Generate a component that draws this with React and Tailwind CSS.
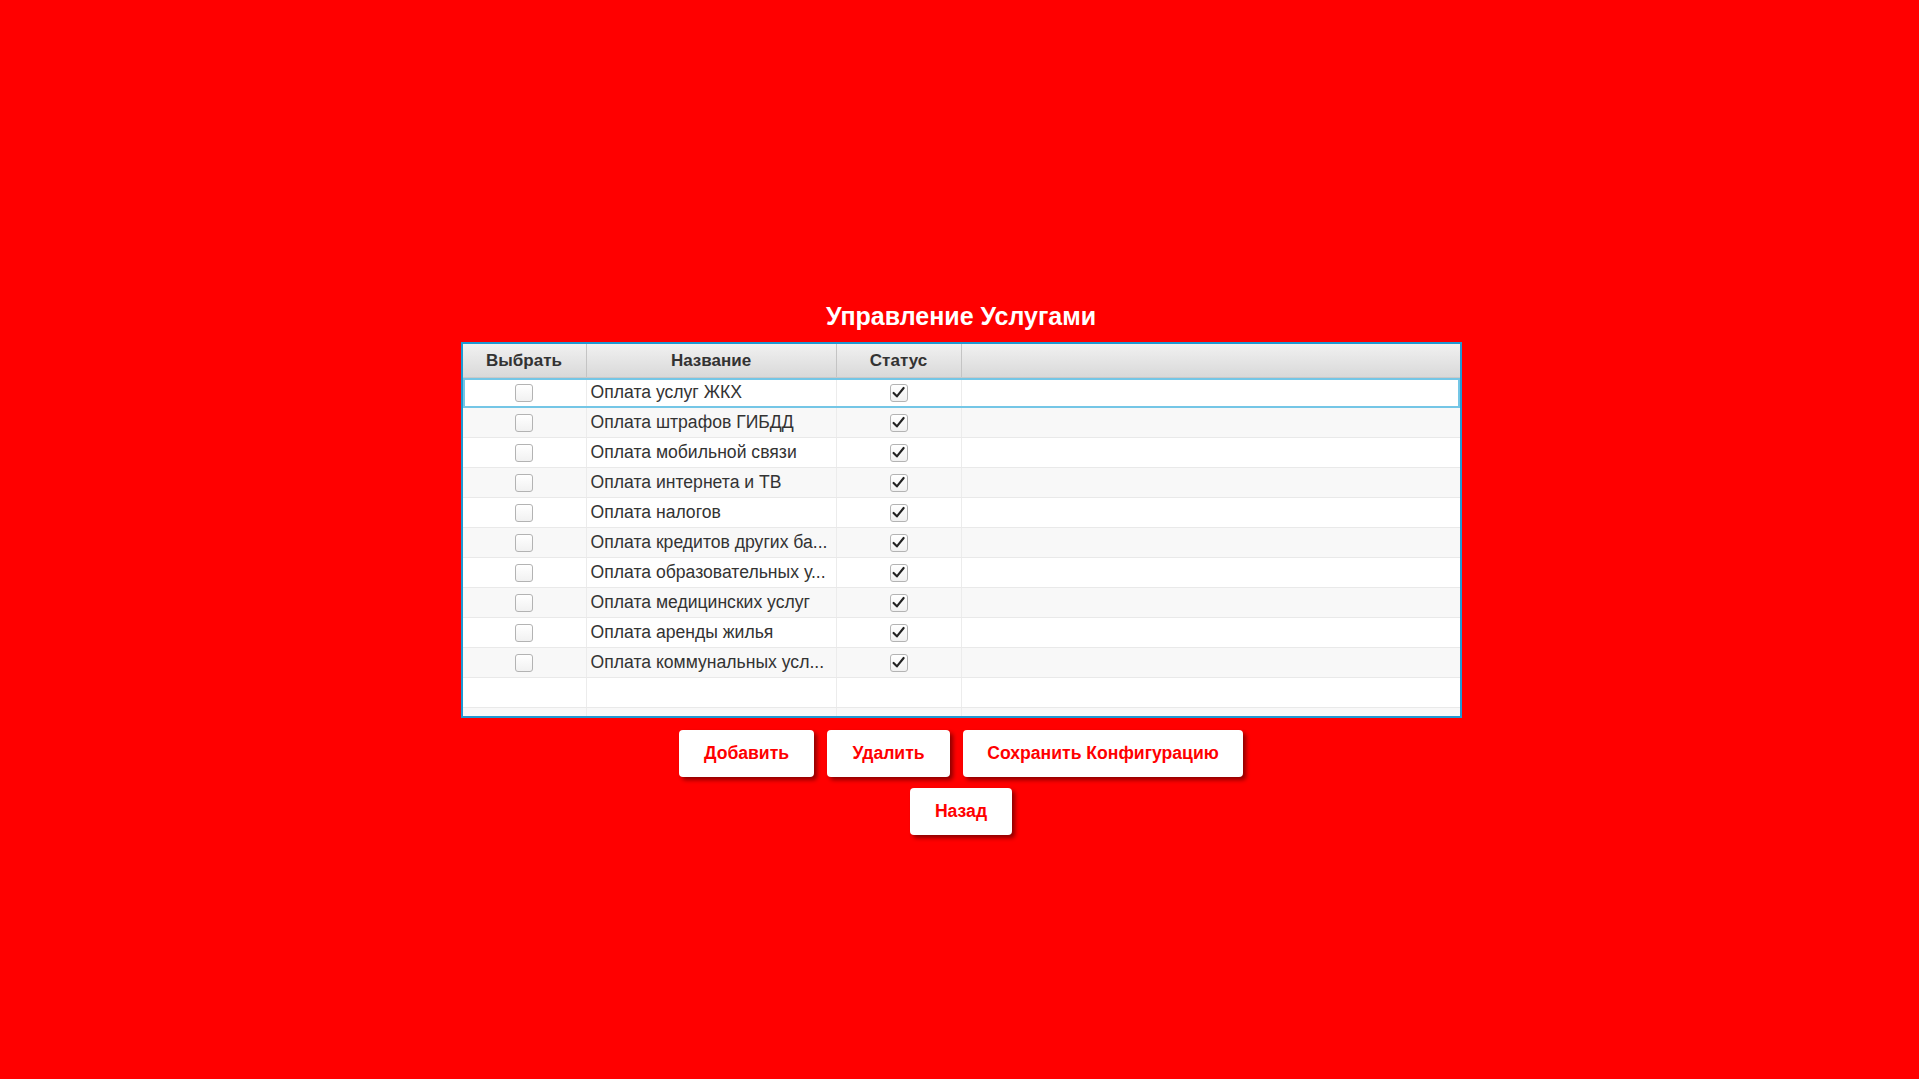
import React from 'react';

const SERVICES = [
  'Оплата услуг ЖКХ',
  'Оплата штрафов ГИБДД',
  'Оплата мобильной связи',
  'Оплата интернета и ТВ',
  'Оплата налогов',
  'Оплата кредитов других ба...',
  'Оплата образовательных у...',
  'Оплата медицинских услуг',
  'Оплата аренды жилья',
  'Оплата коммунальных усл...',
];

const Box = ({ checked }) => (
  <span className="w-[18px] h-[18px] rounded-[3px] border border-[#b3b3b3] bg-linear-to-b from-white to-[#f1f1f1] flex items-center justify-center">
    {checked && (
      <svg width="15" height="15" viewBox="0 0 14 14" fill="none">
        <path d="M2.4 7.4 L5.5 10.6 L11.8 2.8" stroke="#222" strokeWidth="2" strokeLinecap="round" strokeLinejoin="round" />
      </svg>
    )}
  </span>
);

const Row = ({ name, index, empty }) => {
  const selected = index === 0;
  return (
    <div
      className={`
        grid grid-cols-[124px_250px_125px_1fr] h-[30px] border-b border-[#e9e9e9] text-[17.6px] text-[#333]
        ${index % 2 === 0 ? 'bg-white' : 'bg-[#f8f8f8]'}
        ${selected ? 'outline-2 outline-[#74c6e6] -outline-offset-2' : ''}
      `}
    >
      <div className="border-r border-[#ececec] flex items-center justify-center">
        {!empty && <Box />}
      </div>
      <div className="border-r border-[#ececec] flex items-center pl-[4px] whitespace-nowrap overflow-hidden">
        {name}
      </div>
      <div className="border-r border-[#ececec] flex items-center justify-center">
        {!empty && <Box checked />}
      </div>
      <div />
    </div>
  );
};

const Button = ({ children, w }) => (
  <button className={`${w} h-[47px] bg-white rounded-[4px] text-[#ff0000] text-[17.6px] font-bold shadow-[3px_3px_4px_rgba(0,0,0,0.45)]`}>
    {children}
  </button>
);

export default function App() {
  return (
    <div className="min-h-screen bg-[#ff0000] flex flex-col items-center pt-[301px] pl-[3px] font-['Liberation_Sans',Arial,sans-serif]">
      <h1 className="text-white text-[25px] leading-[30px] font-bold mb-[11px]">Управление Услугами</h1>

      {/* Table */}
      <div className="w-[1001px] h-[376px] border-2 border-[#1f98d2] bg-white overflow-hidden">
        <div className="grid grid-cols-[124px_250px_125px_1fr] h-[34px] bg-linear-to-b from-[#f1f1f1] to-[#d9d9d9] border-b border-[#c9c9c9] text-[17px] font-bold text-[#333]">
          {['Выбрать', 'Название', 'Статус', ''].map((h, i) => (
            <div key={i} className={`flex items-center justify-center ${i < 3 ? 'border-r border-[#c4c4c4]' : ''}`}>
              {h}
            </div>
          ))}
        </div>
        {SERVICES.map((s, i) => (
          <Row key={s} name={s} index={i} />
        ))}
        <Row index={10} empty />
        <Row index={11} empty />
      </div>

      {/* Actions */}
      <div className="flex gap-[13px] mt-[12px]">
        <Button w="w-[135px]">Добавить</Button>
        <Button w="w-[123px]">Удалить</Button>
        <Button w="w-[280px]">Сохранить Конфигурацию</Button>
      </div>
      <div className="mt-[11px]">
        <Button w="w-[102px]">Назад</Button>
      </div>
    </div>
  );
}
